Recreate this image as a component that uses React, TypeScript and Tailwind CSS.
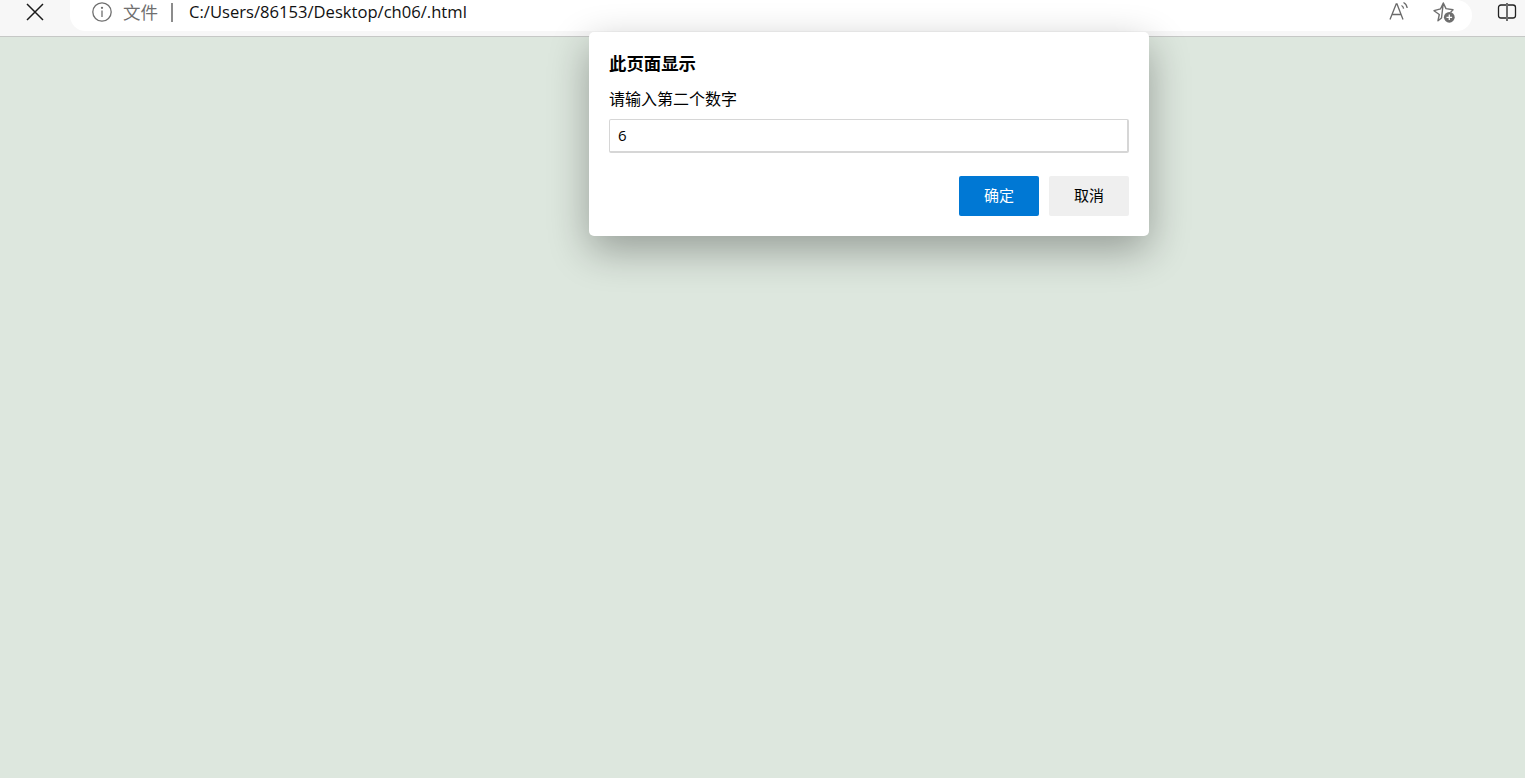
import React from "react";

const font = {
  fontFamily: '"Noto Sans CJK SC", "Liberation Sans", sans-serif',
};

const CloseIcon = () => (
  <svg width="18" height="18" viewBox="0 0 18 18" fill="none" stroke="#1a1a1a" strokeWidth="1.500">
    <path d="M1 1l16 16M17 1 1 17" />
  </svg>
);

const InfoIcon = () => (
  <svg width="20" height="20" viewBox="0 0 20 20" fill="none" stroke="#6f6f6f" strokeWidth="1.300">
    <circle cx="10" cy="10" r="9.200" />
    <path d="M10 8.500v6.500" />
    <circle cx="10" cy="5.800" r="0.500" fill="#6f6f6f" />
  </svg>
);

const ReadAloudIcon = () => (
  <svg width="22" height="22" viewBox="0 0 22 22" fill="none" stroke="#6a6a6a" strokeWidth="1.300">
    <path d="M2 18.500 8.200 3h.8l6 15.500M4.200 13.500h8.800" />
    <path d="M13.500 4.500c1.200.6 1.900 1.700 2.100 3.200M15.500 1.500c2 1 3.300 2.900 3.700 5.500" />
  </svg>
);

const FavoriteAddIcon = () => (
  <svg width="24" height="24" viewBox="0 0 24 24" fill="none">
    <path
      d="M11.300 3 14 8.600 21 9.800 18.500 12.500M9.500 18 6 20.700 7.300 14.500 2 10.700 8.600 8.800 11.300 3Z"
      stroke="#6f6f6f"
      strokeWidth="1.400"
      strokeLinejoin="round"
    />
    <circle cx="17.300" cy="17.300" r="5.400" fill="#6e6e6e" />
    <path d="M17.300 14.500v5.600M14.500 17.300h5.600" stroke="#fff" strokeWidth="1.300" />
  </svg>
);

const SplitIcon = () => (
  <svg width="20" height="20" viewBox="0 0 20 20" fill="none" stroke="#222" strokeWidth="1.300">
    <path d="M9 3H4a2.500 2.500 0 0 0-2.500 2.500v8A2.500 2.500 0 0 0 4 16h5M11 3h5a2.500 2.500 0 0 1 2.500 2.500v8A2.500 2.500 0 0 1 16 16h-5M10 1v18" />
  </svg>
);

export default function App() {
  return (
    <div className="relative flex h-[778px] flex-col overflow-hidden bg-[#dde7de]" style={font}>
      <header className="flex h-[37px] shrink-0 items-start border-b border-[#c6c8c6] bg-[#f7f7f7]">
        <div className="flex h-[24px] w-[70px] shrink-0 items-center pl-[26px]">
          <CloseIcon />
        </div>
        <div className="flex h-[31px] flex-1 items-start rounded-b-[16px] rounded-r-[16px] bg-white pl-[22px] pr-[16px]">
          <div className="flex h-[24px] items-center">
            <InfoIcon />
            <span className="ml-[11px] text-[17.500px] leading-none text-[#6f6f6f]">文件</span>
            <span className="ml-[13px] h-[19px] w-[2px] bg-[#8c8c8c]" />
            <span className="ml-[16px] text-[16.600px] leading-none text-[#111]" style={{ fontFamily: '"Open Sans", sans-serif' }}>
              C:/Users/86153/Desktop/ch06/.html
            </span>
          </div>
          <div className="ml-auto flex h-[24px] items-center gap-[22px]">
            <ReadAloudIcon />
            <FavoriteAddIcon />
          </div>
        </div>
        <div className="flex h-[24px] w-[53px] shrink-0 items-center justify-end pr-[8px]">
          <SplitIcon />
        </div>
      </header>

      <main className="flex-1" />

      <div className="absolute left-[589px] top-[32px] flex h-[204px] w-[560px] flex-col rounded-[5px] bg-white px-[20px] pt-[20px] shadow-[0_14px_40px_rgba(0,0,0,0.32)]">
        <h1 className="text-[17.400px] font-bold leading-[21px] text-black">此页面显示</h1>
        <p className="mt-[16px] text-[16px] leading-[18px] text-black">请输入第二个数字</p>
        <div className="mt-[12px] flex h-[34px] w-[520px] items-center rounded-[2px] border border-[#d6d6d6] border-b-2 border-r-2 px-[8px] text-[15px] text-black" style={{ fontFamily: '"Open Sans", sans-serif' }}>
          6
        </div>
        <div className="mt-[23px] flex justify-end gap-[10px]">
          <button className="h-[40px] w-[80px] rounded-[2px] bg-[#0078d4] pb-[2px] text-[15px] text-white">确定</button>
          <button className="h-[40px] w-[80px] rounded-[2px] bg-[#efefef] pb-[2px] text-[15px] text-black">取消</button>
        </div>
      </div>
    </div>
  );
}
